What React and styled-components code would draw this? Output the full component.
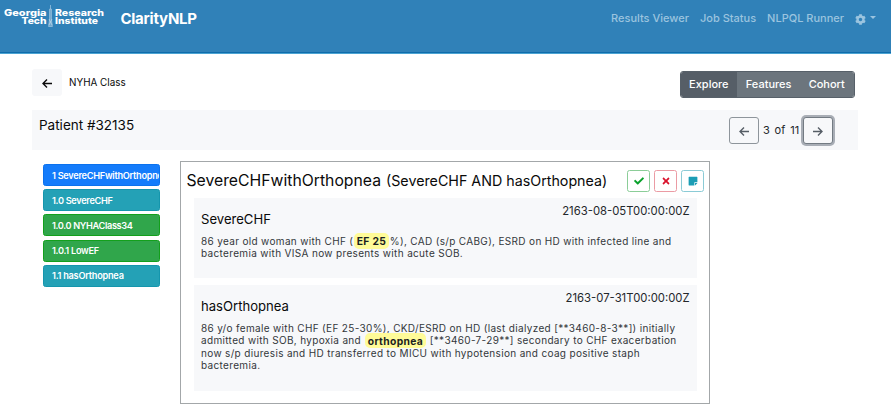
import React from 'react';
import styled, { createGlobalStyle, css } from 'styled-components';
import { FaCog, FaCheck, FaTimes, FaStickyNote } from 'react-icons/fa';

const GlobalStyle = createGlobalStyle`
  *, *::before, *::after { box-sizing: border-box; }
  body {
    margin: 0;
    background: #fff;
    color: #0a0a0a;
    font-family: Inter, "Liberation Sans", sans-serif;
    overflow: hidden;
  }
  h1, h2, h3, p { margin: 0; font-weight: 400; }
  button { margin: 0; padding: 0; font: inherit; color: inherit; }
`;

const Page = styled.div`
  width: 891px;
  height: 415px;
  overflow: hidden;
`;

const Navbar = styled.header`
  display: flex;
  align-items: flex-start;
  height: 54px;
  padding: 0 15px 0 4px;
  background: #3081b8;
  border-bottom: 1px solid #4aa3d2;
  box-shadow: inset 0 -1px 0 #0f6cab;
`;

const Logo = styled.svg`
  flex: none;
  width: 102px;
  height: 30px;
  font-family: Inter, sans-serif;
  font-size: 9px;
  font-weight: 800;
  fill: #fff;
`;

const Brand = styled.div`
  margin: 9px 0 0 14.4px;
  color: #fff;
  font-size: 15px;
  font-weight: 700;
  letter-spacing: -0.22px;
  line-height: 20px;
`;

const NavLinks = styled.nav`
  display: flex;
  gap: 11px;
  margin: 10px 0 0 auto;
`;

const NavLink = styled.a`
  display: flex;
  align-items: center;
  gap: 4px;
  color: #9bc4df;
  font-size: 11px;
  font-weight: 500;
  line-height: 16px;
  white-space: nowrap;

  svg { margin-top: 2px; }
`;

const Caret = styled.span`
  margin-top: -2px;
  border: 3.5px solid transparent;
  border-top-color: currentColor;
  border-bottom: 0;
`;

const Main = styled.main`
  padding: 15px 33px 0 32px;
`;

const TopRow = styled.div`
  display: flex;
  height: 41px;
  padding-right: 3.5px;
`;

const BackButton = styled.button`
  display: grid;
  place-items: center;
  width: 30px;
  height: 27px;
  padding-top: 2px;
  border: 0;
  border-radius: 3px;
  background: #f7f8fa;
`;

const Crumb = styled.span`
  margin: 6.5px 0 0 7px;
  font-size: 9.9px;
  line-height: 12px;
`;

const Tabs = styled.div`
  display: flex;
  height: 27px;
  margin: 2px 0 0 auto;
  overflow: hidden;
  border: 1px solid #576069;
  border-radius: 3px;
`;

const Tab = styled.button`
  padding: 0 8.7px 0 8.5px;
  border: 0;
  background: ${(p) => (p.$active ? '#565e67' : '#6c757d')};
  color: #fff;
  font-size: 11px;
  font-weight: 500;
  line-height: 25px;
`;

const PatientBar = styled.section`
  display: flex;
  height: 40px;
  padding: 0 25px 0 7px;
  background: #f7f8fa;
`;

const PatientName = styled.h1`
  margin-top: 7px;
  font-size: 13.5px;
  line-height: 17px;
`;

const Pager = styled.div`
  display: flex;
  align-items: center;
  margin-left: auto;
  color: #23272b;
`;

const PagerText = styled.span`
  width: 44px;
  padding-left: 4px;
  font-size: 11px;
  letter-spacing: 0.15px;
  word-spacing: 1.4px;
  white-space: nowrap;
`;

const PagerButton = styled.button`
  display: grid;
  place-items: center;
  width: 30px;
  height: 27px;
  padding-top: 2px;
  border: 1px solid #8e959b;
  border-radius: 3px;
  background: #f7f8fa;
  color: #555d65;
  ${(p) => p.$focused && css`
    border-color: #737b83;
    box-shadow: 0 0 0 2px #a9aeb6;
  `}
`;

const Content = styled.div`
  display: flex;
  align-items: flex-start;
  gap: 20.5px;
  padding: 11px 0 0 11px;
`;

const PhenotypeList = styled.div`
  display: flex;
  flex-direction: column;
  gap: 3.2px;
  width: 116.5px;
  padding-top: 3px;
`;

const tones = {
  primary: ['#147cfb', '#0b72ee'],
  info: ['#24a1b6', '#1596ad'],
  success: ['#30a64b', '#13a01c'],
};

const PhenotypeItem = styled.button`
  height: 22px;
  padding-left: 8px;
  overflow: hidden;
  border: 1px solid ${(p) => tones[p.$tone][1]};
  border-radius: 2.5px;
  background: ${(p) => tones[p.$tone][0]};
  color: #fff;
  font-size: 9.2px;
  font-weight: 600;
  letter-spacing: ${(p) => p.$tracking}px;
  text-align: left;
  white-space: nowrap;
`;

const ResultCard = styled.article`
  width: 530px;
  height: 243px;
  border: 1px solid #a3a7a9;
  padding: 8px 5px 0 6px;
`;

const ResultHeader = styled.div`
  display: flex;
  align-items: flex-start;
  height: 28px;
`;

const ResultTitle = styled.h2`
  display: flex;
  align-items: baseline;
  gap: 5px;
  margin: 1px 0 0 -0.5px;
  font-size: 15.75px;
  line-height: 20px;
  white-space: nowrap;
`;

const Expression = styled.span`
  font-size: 14.27px;
`;

const Actions = styled.div`
  display: flex;
  gap: 4px;
  margin-left: auto;
`;

const ActionButton = styled.button`
  display: grid;
  place-items: center;
  width: 23px;
  height: 22px;
  border: 1px solid ${(p) => p.$edge};
  border-radius: 2.5px;
  background: #fff;
  color: ${(p) => p.$color};
`;

const Evidence = styled.section`
  width: 503px;
  height: ${(p) => p.$height}px;
  margin: 0 0 7px 7px;
  padding: 7px 7.5px 0 7px;
  background: #f7f8fa;
`;

const EvidenceHeader = styled.div`
  display: flex;
  justify-content: space-between;
  height: 29.7px;
`;

const EvidenceTitle = styled.h3`
  margin-top: 5.5px;
  font-size: 13.1px;
  line-height: 17px;
`;

const Timestamp = styled.time`
  margin-top: -1px;
  color: #23272b;
  font-size: 11.3px;
  line-height: 14px;
`;

const Note = styled.p`
  color: #33373b;
  font-size: 10px;
  letter-spacing: 0.335px;
  line-height: 12.6px;
  white-space: nowrap;
`;

const Highlight = styled.mark`
  margin: 0 1px;
  padding: 1.5px 2.5px 2px;
  border-radius: 5px;
  background: #fffb98;
  color: #1b1e21;
  font-size: 10.3px;
  font-weight: 700;
`;

function Arrow({ flip }) {
  return (
    <svg width="10" height="9" viewBox="0 0 10 9" fill="none" stroke="currentColor" strokeWidth="1.35">
      <path d={flip ? 'M0 4.5H9M5 .6L9 4.5L5 8.4' : 'M10 4.5H1M5 .6L1 4.5L5 8.4'} />
    </svg>
  );
}

function InstituteLogo() {
  const fit = { lengthAdjust: 'spacingAndGlyphs' };
  return (
    <Logo viewBox="0 0 102 30">
      <text x="0" y="15.5" textLength="42.5" {...fit}>Georgia</text>
      <text x="17.5" y="24" textLength="25" {...fit}>Tech</text>
      <text x="51" y="15.5" textLength="49" {...fit}>Research</text>
      <text x="51" y="24" textLength="43" {...fit}>Institute</text>
      <path d="M46.5 5V9M45.6 9V19L44.6 26.5H48.4L47.4 19V9Z" fill="#70a8ce" stroke="#a4c9e2" strokeWidth=".7" />
      <path d="M45 19L48 25M48 19L45 25" stroke="#c5dced" strokeWidth=".6" />
    </Logo>
  );
}

const phenotypes = [
  ['1 SevereCHFwithOrthopnea', 'primary', -0.28],
  ['1.0 SevereCHF', 'info', -0.32],
  ['1.0.0 NYHAClass34', 'success', -0.36],
  ['1.0.1 LowEF', 'success', -0.28],
  ['1.1 hasOrthopnea', 'info', -0.25],
];

const navItems = ['Results Viewer', 'Job Status', 'NLPQL Runner'];

export default function App() {
  return (
    <Page>
      <GlobalStyle />
      <Navbar>
        <InstituteLogo />
        <Brand>ClarityNLP</Brand>
        <NavLinks>
          {navItems.map((item) => <NavLink key={item}>{item}</NavLink>)}
          <NavLink><FaCog size={11} /><Caret /></NavLink>
        </NavLinks>
      </Navbar>
      <Main>
        <TopRow>
          <BackButton aria-label="Back"><Arrow /></BackButton>
          <Crumb>NYHA Class</Crumb>
          <Tabs>
            <Tab $active>Explore</Tab>
            <Tab>Features</Tab>
            <Tab>Cohort</Tab>
          </Tabs>
        </TopRow>
        <PatientBar>
          <PatientName>Patient #32135</PatientName>
          <Pager>
            <PagerButton aria-label="Previous"><Arrow /></PagerButton>
            <PagerText>3 of 11</PagerText>
            <PagerButton $focused aria-label="Next"><Arrow flip /></PagerButton>
          </Pager>
        </PatientBar>
        <Content>
          <PhenotypeList>
            {phenotypes.map(([name, tone, tracking]) => (
              <PhenotypeItem key={name} $tone={tone} $tracking={tracking}>{name}</PhenotypeItem>
            ))}
          </PhenotypeList>
          <ResultCard>
            <ResultHeader>
              <ResultTitle>
                SevereCHFwithOrthopnea <Expression>(SevereCHF AND hasOrthopnea)</Expression>
              </ResultTitle>
              <Actions>
                <ActionButton $color="#0aa22c" $edge="#8bcd98" aria-label="Accept"><FaCheck size={10} /></ActionButton>
                <ActionButton $color="#d9122c" $edge="#eb9ba4" aria-label="Reject"><FaTimes size={10} /></ActionButton>
                <ActionButton $color="#1b9db5" $edge="#8bcbd6" aria-label="Comment"><FaStickyNote size={10} /></ActionButton>
              </Actions>
            </ResultHeader>
            <Evidence $height={80}>
              <EvidenceHeader>
                <EvidenceTitle>SevereCHF</EvidenceTitle>
                <Timestamp>2163-08-05T00:00:00Z</Timestamp>
              </EvidenceHeader>
              <Note>
                86 year old woman with CHF (<Highlight>EF 25</Highlight>%), CAD (s/p CABG), ESRD on HD with infected line and<br />
                bacteremia with VISA now presents with acute SOB.
              </Note>
            </Evidence>
            <Evidence $height={106}>
              <EvidenceHeader>
                <EvidenceTitle>hasOrthopnea</EvidenceTitle>
                <Timestamp>2163-07-31T00:00:00Z</Timestamp>
              </EvidenceHeader>
              <Note>
                86 y/o female with CHF (EF 25-30%), CKD/ESRD on HD (last dialyzed [**3460-8-3**]) initially<br />
                admitted with SOB, hypoxia and <Highlight>orthopnea</Highlight> [**3460-7-29**] secondary to CHF exacerbation<br />
                now s/p diuresis and HD transferred to MICU with hypotension and coag positive staph<br />
                bacteremia.
              </Note>
            </Evidence>
          </ResultCard>
        </Content>
      </Main>
    </Page>
  );
}
